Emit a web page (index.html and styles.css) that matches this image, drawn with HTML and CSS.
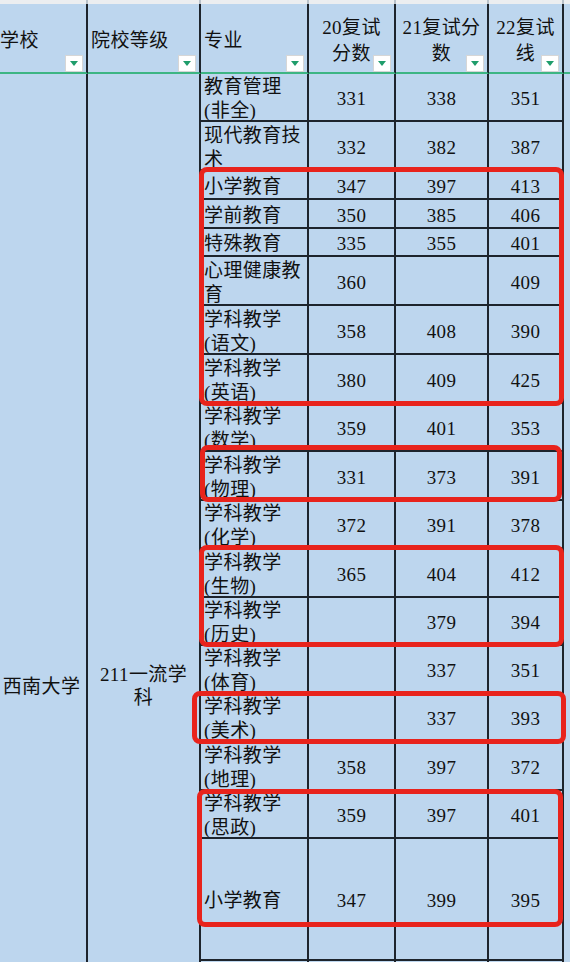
FILE: index.html
```html
<!DOCTYPE html>
<html lang="zh-CN">
<head>
<meta charset="utf-8">
<title>西南大学 复试分数</title>
<link rel="stylesheet" href="styles.css">
</head>
<body>
<div class="sheet">
  <div class="grid">
    <div class="strip"></div><div class="strip"></div><div class="strip"></div><div class="strip"></div><div class="strip"></div><div class="strip"></div><div class="strip last"></div>

    <div class="h hl"><span class="v">学校</span><span class="dd"></span></div>
    <div class="h hl"><span class="v">院校等级</span><span class="dd"></span></div>
    <div class="h hl"><span class="v">专业</span><span class="dd"></span></div>
    <div class="h hc"><span class="v">20复试<br>分数</span><span class="dd"></span></div>
    <div class="h hc"><span class="v">21复试分<br>数</span><span class="dd"></span></div>
    <div class="h hc"><span class="v">22复试<br>线</span><span class="dd"></span></div>
    <div class="h hx"></div>

    <div class="school"><span class="v">西南大学</span></div>
    <div class="level"><span class="v">211一流学<br>科</span></div>

    <div class="c t"><span class="v">教育管理<br>(非全)</span></div><div class="c n">331</div><div class="c n">338</div><div class="c n">351</div><div class="x"></div>
    <div class="c t"><span class="v">现代教育技<br>术</span></div><div class="c n">332</div><div class="c n">382</div><div class="c n">387</div><div class="x"></div>
    <div class="c t"><span class="v">小学教育</span></div><div class="c n">347</div><div class="c n">397</div><div class="c n">413</div><div class="x"></div>
    <div class="c t"><span class="v">学前教育</span></div><div class="c n">350</div><div class="c n">385</div><div class="c n">406</div><div class="x"></div>
    <div class="c t"><span class="v">特殊教育</span></div><div class="c n">335</div><div class="c n">355</div><div class="c n">401</div><div class="x"></div>
    <div class="c t"><span class="v">心理健康教<br>育</span></div><div class="c n">360</div><div class="c n"></div><div class="c n">409</div><div class="x"></div>
    <div class="c t"><span class="v">学科教学<br>(语文)</span></div><div class="c n">358</div><div class="c n">408</div><div class="c n">390</div><div class="x"></div>
    <div class="c t"><span class="v">学科教学<br>(英语)</span></div><div class="c n">380</div><div class="c n">409</div><div class="c n">425</div><div class="x"></div>
    <div class="c t"><span class="v">学科教学<br>(数学)</span></div><div class="c n">359</div><div class="c n">401</div><div class="c n">353</div><div class="x"></div>
    <div class="c t"><span class="v">学科教学<br>(物理)</span></div><div class="c n">331</div><div class="c n">373</div><div class="c n">391</div><div class="x"></div>
    <div class="c t"><span class="v">学科教学<br>(化学)</span></div><div class="c n">372</div><div class="c n">391</div><div class="c n">378</div><div class="x"></div>
    <div class="c t"><span class="v">学科教学<br>(生物)</span></div><div class="c n">365</div><div class="c n">404</div><div class="c n">412</div><div class="x"></div>
    <div class="c t"><span class="v">学科教学<br>(历史)</span></div><div class="c n"></div><div class="c n">379</div><div class="c n">394</div><div class="x"></div>
    <div class="c t"><span class="v">学科教学<br>(体育)</span></div><div class="c n"></div><div class="c n">337</div><div class="c n">351</div><div class="x"></div>
    <div class="c t"><span class="v">学科教学<br>(美术)</span></div><div class="c n"></div><div class="c n">337</div><div class="c n">393</div><div class="x"></div>
    <div class="c t"><span class="v">学科教学<br>(地理)</span></div><div class="c n">358</div><div class="c n">397</div><div class="c n">372</div><div class="x"></div>
    <div class="c t"><span class="v">学科教学<br>(思政)</span></div><div class="c n">359</div><div class="c n">397</div><div class="c n">401</div><div class="x"></div>
    <div class="c t"><span class="v">小学教育</span></div><div class="c n">347</div><div class="c n">399</div><div class="c n">395</div><div class="x"></div>
    <div class="c t"></div><div class="c n"></div><div class="c n"></div><div class="c n"></div><div class="x"></div>
  </div>

  <div class="mark m1"></div>
  <div class="mark m2"></div>
  <div class="mark m3"></div>
  <div class="mark m4"></div>
  <div class="mark m5"></div>
</div>
</body>
</html>
```

FILE: styles.css
```css
html, body {
  margin: 0;
  padding: 0;
}

body {
  background: #bdd6ee;
  overflow: hidden;
  font-family: "Liberation Serif", "Noto Sans CJK SC", serif;
  font-size: 19px;
  letter-spacing: 0.4px;
  color: #111;
}

.sheet {
  position: relative;
  width: 570px;
  height: 962px;
  overflow: hidden;
}

.grid {
  display: grid;
  margin-left: -3px;
  grid-template-columns: 91px 113px 108px 87px 93px 75px 30px;
  grid-template-rows: 4px 70px 48px 49px 29px 29px 28px 49px 49px 49px 48px 49px 48px 49px 48px 48px 48px 49px 48px 122px 337px;
}

.grid > div {
  box-sizing: border-box;
  min-width: 0;
}

.strip {
  background: #eceef0;
  border-right: 2px solid #b9c2cb;
}

.strip.last {
  border-right: none;
}

.h {
  position: relative;
  display: flex;
  align-items: center;
  padding: 6px 3px 0;
  line-height: 26px;
  border-right: 2px solid #1d242c;
  border-bottom: 2px solid #3db583;
  white-space: nowrap;
}

.hl {
  justify-content: flex-start;
}

.hc {
  justify-content: center;
  text-align: center;
}

.hx {
  border-right: none;
}

.dd {
  position: absolute;
  right: 3px;
  bottom: 0;
  width: 18px;
  height: 17px;
  box-sizing: border-box;
  background: #fff;
  border: 1px solid #d6d6d6;
  display: flex;
  align-items: center;
  justify-content: center;
}

.dd::after {
  content: "";
  width: 0;
  height: 0;
  border-left: 4.5px solid transparent;
  border-right: 4.5px solid transparent;
  border-top: 5px solid #1f9d6b;
}

.school,
.level {
  grid-row: 3 / span 19;
  display: flex;
  align-items: center;
  justify-content: center;
  text-align: center;
  line-height: 23px;
  border-right: 2px solid #1d242c;
}

.school {
  grid-column: 1;
}

.level {
  grid-column: 2;
}

.c {
  display: flex;
  align-items: center;
  padding-top: 4px;
  line-height: 24px;
  border-right: 2px solid #1d242c;
  border-bottom: 2px solid #1d242c;
  white-space: nowrap;
}

.t {
  padding-left: 3px;
}

.n {
  justify-content: center;
}

.mark {
  position: absolute;
  box-sizing: border-box;
  border: 5px solid #e8231c;
  border-radius: 8px;
}

.m1 {
  left: 199px;
  top: 167px;
  width: 365px;
  height: 239px;
}

.m2 {
  left: 200px;
  top: 445px;
  width: 362px;
  height: 57px;
}

.m3 {
  left: 199px;
  top: 545px;
  width: 365px;
  height: 102px;
}

.m4 {
  left: 192px;
  top: 691px;
  width: 374px;
  height: 53px;
}

.m5 {
  left: 197px;
  top: 789px;
  width: 366px;
  height: 138px;
}
```
